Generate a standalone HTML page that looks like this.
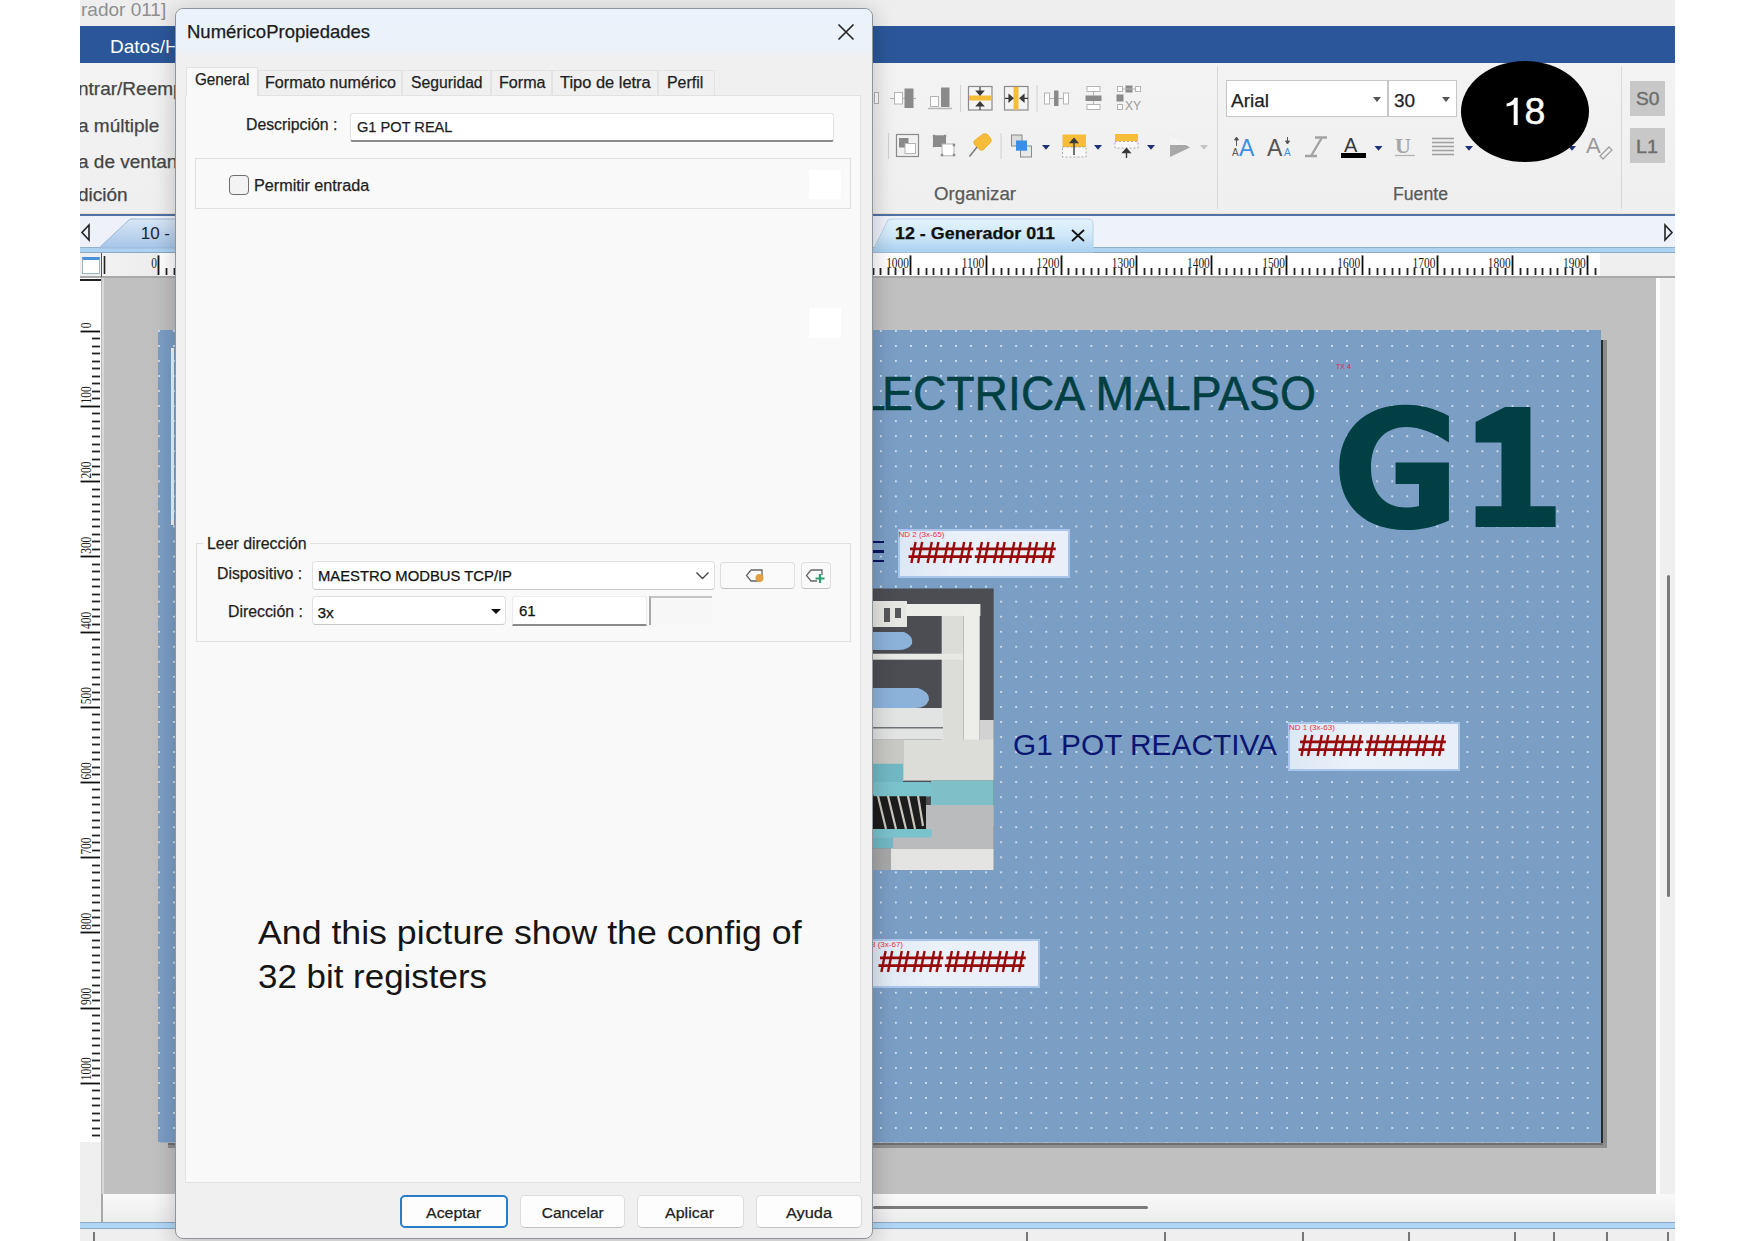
<!DOCTYPE html>
<html><head><meta charset="utf-8">
<style>
*{margin:0;padding:0;box-sizing:border-box}
html,body{width:1755px;height:1241px;overflow:hidden;background:#fff;font-family:"Liberation Sans",sans-serif;position:relative}
.a{position:absolute}
.t{position:absolute;white-space:nowrap;line-height:1}
svg{display:block}
</style></head><body>
<div class=a style="left:80px;top:0px;width:1595px;height:26px;background:#eeeeee;"></div>
<div class=t style="left:81.0px;top:0.4px;font-size:19px;color:#8f8f8f;font-weight:400;font-family:'Liberation Sans';font-style:normal;">rador 011]</div>
<div class=a style="left:80px;top:26px;width:1595px;height:37px;background:#2b579a;"></div>
<div class=t style="left:110.0px;top:36.9px;font-size:19px;color:#ffffff;font-weight:400;font-family:'Liberation Sans';font-style:normal;">Datos/H</div>
<div class=a style="left:80px;top:63px;width:1595px;height:151px;background:linear-gradient(#f3f3f3,#efefef);"></div>
<div class=t style="left:78.0px;top:79.2px;font-size:19px;color:#444444;font-weight:400;font-family:'Liberation Sans';font-style:normal;-webkit-text-stroke:0.25px #444444;">ntrar/Reemp</div>
<div class=t style="left:78.0px;top:115.6px;font-size:19px;color:#444444;font-weight:400;font-family:'Liberation Sans';font-style:normal;-webkit-text-stroke:0.25px #444444;">a múltiple</div>
<div class=t style="left:78.0px;top:151.9px;font-size:19px;color:#444444;font-weight:400;font-family:'Liberation Sans';font-style:normal;-webkit-text-stroke:0.25px #444444;">a de ventana</div>
<div class=t style="left:78.0px;top:184.6px;font-size:19px;color:#444444;font-weight:400;font-family:'Liberation Sans';font-style:normal;-webkit-text-stroke:0.25px #444444;">dición</div>
<div class=t style="left:934.0px;top:184.8px;font-size:18px;color:#5a5a5a;font-weight:400;font-family:'Liberation Sans';font-style:normal;transform:scaleX(1.0376);transform-origin:0 0;-webkit-text-stroke:0.25px #5a5a5a;">Organizar</div>
<div class=t style="left:1393.0px;top:184.8px;font-size:18px;color:#5a5a5a;font-weight:400;font-family:'Liberation Sans';font-style:normal;transform:scaleX(0.9813);transform-origin:0 0;-webkit-text-stroke:0.25px #5a5a5a;">Fuente</div>
<div class=a style="left:1217px;top:66px;width:1px;height:143px;background:#d8d8d8;"></div>
<div class=a style="left:1621px;top:66px;width:1px;height:143px;background:#d8d8d8;"></div>
<div class=a style="left:80px;top:213px;width:1595px;height:1px;background:#e9dfd3;"></div>
<div class=a style="left:80px;top:214px;width:1595px;height:2px;background:#4f73a6;"></div>
<div class=a style="left:80px;top:216px;width:1595px;height:32px;background:linear-gradient(90deg,#eef1fa,#eef2fb);"></div>
<div class=a style="left:80px;top:247px;width:1595px;height:1px;background:#8fb0d2;"></div>
<div class=a style="left:80px;top:248px;width:1595px;height:5px;background:#aed2f2;"></div>
<div class=a style="left:80px;top:252px;width:1595px;height:1px;background:#8ea9c5;"></div>
<svg class=a style='left:80px;top:214px' width='1595' height='40'><defs><linearGradient id='tg1' x1='0' y1='0' x2='0' y2='1'><stop offset='0' stop-color='#d9e7f6'/><stop offset='1' stop-color='#a6c5e8'/></linearGradient><linearGradient id='tg2' x1='0' y1='0' x2='0' y2='1'><stop offset='0' stop-color='#e3f3fc'/><stop offset='0.5' stop-color='#cfe8f8'/><stop offset='1' stop-color='#aad1f1'/></linearGradient></defs><path d='M19 34 L50 5 H140 V34 Z' fill='url(#tg1)' stroke='#9db8d8' stroke-width='1'/><path d='M792 38 L808 6 Q810 5 814 5 H1008 Q1013 5 1013 10 V38 Z' fill='url(#tg2)' stroke='#b7d2ea' stroke-width='1'/><path d='M9 11 L2 18.5 L9 26 Z' fill='none' stroke='#222' stroke-width='1.6'/><path d='M1585 11 L1592 18.5 L1585 26 Z' fill='none' stroke='#222' stroke-width='1.6'/><path d='M992 16 L1004 27 M1004 16 L992 27' stroke='#111' stroke-width='1.8'/></svg>
<div class=t style="left:140.7px;top:225.1px;font-size:17px;color:#1a2636;font-weight:400;font-family:'Liberation Sans';font-style:normal;">10 -</div>
<div class=t style="left:895.0px;top:225.1px;font-size:17px;color:#111;font-weight:700;font-family:'Liberation Sans';font-style:normal;transform:scaleX(1.0517);transform-origin:0 0;-webkit-text-stroke:0.25px #111;">12 - Generador 011</div>
<div class=a style="left:80px;top:253px;width:1595px;height:23px;background:#efefef;"></div>
<div class=a style="left:102px;top:253px;width:56px;height:23px;background:linear-gradient(90deg,#f2f2f2,#ececec);"></div>
<div class=a style="left:158px;top:253px;width:1442px;height:23px;background:#ffffff;"></div>
<div class=a style="left:80px;top:276px;width:1595px;height:2px;background:#a9a9a9;"></div>
<svg class=a style='left:0;top:253px' width='1755' height='24'><line x1='158.5' y1='2.4' x2='158.5' y2='22' stroke='#111' stroke-width='1.8'/><line x1='166.5' y1='15' x2='166.5' y2='22' stroke='#222' stroke-width='1.8'/><line x1='174.5' y1='15' x2='174.5' y2='22' stroke='#222' stroke-width='1.8'/><line x1='181.5' y1='15' x2='181.5' y2='22' stroke='#222' stroke-width='1.8'/><line x1='189.5' y1='15' x2='189.5' y2='22' stroke='#222' stroke-width='1.8'/><line x1='196.5' y1='15' x2='196.5' y2='22' stroke='#222' stroke-width='1.8'/><line x1='204.5' y1='15' x2='204.5' y2='22' stroke='#222' stroke-width='1.8'/><line x1='211.5' y1='15' x2='211.5' y2='22' stroke='#222' stroke-width='1.8'/><line x1='219.5' y1='15' x2='219.5' y2='22' stroke='#222' stroke-width='1.8'/><line x1='226.5' y1='15' x2='226.5' y2='22' stroke='#222' stroke-width='1.8'/><line x1='234.5' y1='2.4' x2='234.5' y2='22' stroke='#111' stroke-width='1.8'/><line x1='241.5' y1='15' x2='241.5' y2='22' stroke='#222' stroke-width='1.8'/><line x1='249.5' y1='15' x2='249.5' y2='22' stroke='#222' stroke-width='1.8'/><line x1='256.5' y1='15' x2='256.5' y2='22' stroke='#222' stroke-width='1.8'/><line x1='264.5' y1='15' x2='264.5' y2='22' stroke='#222' stroke-width='1.8'/><line x1='271.5' y1='15' x2='271.5' y2='22' stroke='#222' stroke-width='1.8'/><line x1='279.5' y1='15' x2='279.5' y2='22' stroke='#222' stroke-width='1.8'/><line x1='286.5' y1='15' x2='286.5' y2='22' stroke='#222' stroke-width='1.8'/><line x1='294.5' y1='15' x2='294.5' y2='22' stroke='#222' stroke-width='1.8'/><line x1='301.5' y1='15' x2='301.5' y2='22' stroke='#222' stroke-width='1.8'/><line x1='309.5' y1='2.4' x2='309.5' y2='22' stroke='#111' stroke-width='1.8'/><line x1='316.5' y1='15' x2='316.5' y2='22' stroke='#222' stroke-width='1.8'/><line x1='324.5' y1='15' x2='324.5' y2='22' stroke='#222' stroke-width='1.8'/><line x1='331.5' y1='15' x2='331.5' y2='22' stroke='#222' stroke-width='1.8'/><line x1='339.5' y1='15' x2='339.5' y2='22' stroke='#222' stroke-width='1.8'/><line x1='346.5' y1='15' x2='346.5' y2='22' stroke='#222' stroke-width='1.8'/><line x1='354.5' y1='15' x2='354.5' y2='22' stroke='#222' stroke-width='1.8'/><line x1='362.5' y1='15' x2='362.5' y2='22' stroke='#222' stroke-width='1.8'/><line x1='369.5' y1='15' x2='369.5' y2='22' stroke='#222' stroke-width='1.8'/><line x1='377.5' y1='15' x2='377.5' y2='22' stroke='#222' stroke-width='1.8'/><line x1='384.5' y1='2.4' x2='384.5' y2='22' stroke='#111' stroke-width='1.8'/><line x1='392.5' y1='15' x2='392.5' y2='22' stroke='#222' stroke-width='1.8'/><line x1='399.5' y1='15' x2='399.5' y2='22' stroke='#222' stroke-width='1.8'/><line x1='407.5' y1='15' x2='407.5' y2='22' stroke='#222' stroke-width='1.8'/><line x1='414.5' y1='15' x2='414.5' y2='22' stroke='#222' stroke-width='1.8'/><line x1='422.5' y1='15' x2='422.5' y2='22' stroke='#222' stroke-width='1.8'/><line x1='429.5' y1='15' x2='429.5' y2='22' stroke='#222' stroke-width='1.8'/><line x1='437.5' y1='15' x2='437.5' y2='22' stroke='#222' stroke-width='1.8'/><line x1='444.5' y1='15' x2='444.5' y2='22' stroke='#222' stroke-width='1.8'/><line x1='452.5' y1='15' x2='452.5' y2='22' stroke='#222' stroke-width='1.8'/><line x1='459.5' y1='2.4' x2='459.5' y2='22' stroke='#111' stroke-width='1.8'/><line x1='467.5' y1='15' x2='467.5' y2='22' stroke='#222' stroke-width='1.8'/><line x1='474.5' y1='15' x2='474.5' y2='22' stroke='#222' stroke-width='1.8'/><line x1='482.5' y1='15' x2='482.5' y2='22' stroke='#222' stroke-width='1.8'/><line x1='489.5' y1='15' x2='489.5' y2='22' stroke='#222' stroke-width='1.8'/><line x1='497.5' y1='15' x2='497.5' y2='22' stroke='#222' stroke-width='1.8'/><line x1='504.5' y1='15' x2='504.5' y2='22' stroke='#222' stroke-width='1.8'/><line x1='512.5' y1='15' x2='512.5' y2='22' stroke='#222' stroke-width='1.8'/><line x1='519.5' y1='15' x2='519.5' y2='22' stroke='#222' stroke-width='1.8'/><line x1='527.5' y1='15' x2='527.5' y2='22' stroke='#222' stroke-width='1.8'/><line x1='534.5' y1='2.4' x2='534.5' y2='22' stroke='#111' stroke-width='1.8'/><line x1='542.5' y1='15' x2='542.5' y2='22' stroke='#222' stroke-width='1.8'/><line x1='550.5' y1='15' x2='550.5' y2='22' stroke='#222' stroke-width='1.8'/><line x1='557.5' y1='15' x2='557.5' y2='22' stroke='#222' stroke-width='1.8'/><line x1='565.5' y1='15' x2='565.5' y2='22' stroke='#222' stroke-width='1.8'/><line x1='572.5' y1='15' x2='572.5' y2='22' stroke='#222' stroke-width='1.8'/><line x1='580.5' y1='15' x2='580.5' y2='22' stroke='#222' stroke-width='1.8'/><line x1='587.5' y1='15' x2='587.5' y2='22' stroke='#222' stroke-width='1.8'/><line x1='595.5' y1='15' x2='595.5' y2='22' stroke='#222' stroke-width='1.8'/><line x1='602.5' y1='15' x2='602.5' y2='22' stroke='#222' stroke-width='1.8'/><line x1='610.5' y1='2.4' x2='610.5' y2='22' stroke='#111' stroke-width='1.8'/><line x1='617.5' y1='15' x2='617.5' y2='22' stroke='#222' stroke-width='1.8'/><line x1='625.5' y1='15' x2='625.5' y2='22' stroke='#222' stroke-width='1.8'/><line x1='632.5' y1='15' x2='632.5' y2='22' stroke='#222' stroke-width='1.8'/><line x1='640.5' y1='15' x2='640.5' y2='22' stroke='#222' stroke-width='1.8'/><line x1='647.5' y1='15' x2='647.5' y2='22' stroke='#222' stroke-width='1.8'/><line x1='655.5' y1='15' x2='655.5' y2='22' stroke='#222' stroke-width='1.8'/><line x1='662.5' y1='15' x2='662.5' y2='22' stroke='#222' stroke-width='1.8'/><line x1='670.5' y1='15' x2='670.5' y2='22' stroke='#222' stroke-width='1.8'/><line x1='677.5' y1='15' x2='677.5' y2='22' stroke='#222' stroke-width='1.8'/><line x1='685.5' y1='2.4' x2='685.5' y2='22' stroke='#111' stroke-width='1.8'/><line x1='692.5' y1='15' x2='692.5' y2='22' stroke='#222' stroke-width='1.8'/><line x1='700.5' y1='15' x2='700.5' y2='22' stroke='#222' stroke-width='1.8'/><line x1='707.5' y1='15' x2='707.5' y2='22' stroke='#222' stroke-width='1.8'/><line x1='715.5' y1='15' x2='715.5' y2='22' stroke='#222' stroke-width='1.8'/><line x1='722.5' y1='15' x2='722.5' y2='22' stroke='#222' stroke-width='1.8'/><line x1='730.5' y1='15' x2='730.5' y2='22' stroke='#222' stroke-width='1.8'/><line x1='738.5' y1='15' x2='738.5' y2='22' stroke='#222' stroke-width='1.8'/><line x1='745.5' y1='15' x2='745.5' y2='22' stroke='#222' stroke-width='1.8'/><line x1='753.5' y1='15' x2='753.5' y2='22' stroke='#222' stroke-width='1.8'/><line x1='760.5' y1='2.4' x2='760.5' y2='22' stroke='#111' stroke-width='1.8'/><line x1='768.5' y1='15' x2='768.5' y2='22' stroke='#222' stroke-width='1.8'/><line x1='775.5' y1='15' x2='775.5' y2='22' stroke='#222' stroke-width='1.8'/><line x1='783.5' y1='15' x2='783.5' y2='22' stroke='#222' stroke-width='1.8'/><line x1='790.5' y1='15' x2='790.5' y2='22' stroke='#222' stroke-width='1.8'/><line x1='798.5' y1='15' x2='798.5' y2='22' stroke='#222' stroke-width='1.8'/><line x1='805.5' y1='15' x2='805.5' y2='22' stroke='#222' stroke-width='1.8'/><line x1='813.5' y1='15' x2='813.5' y2='22' stroke='#222' stroke-width='1.8'/><line x1='820.5' y1='15' x2='820.5' y2='22' stroke='#222' stroke-width='1.8'/><line x1='828.5' y1='15' x2='828.5' y2='22' stroke='#222' stroke-width='1.8'/><line x1='835.5' y1='2.4' x2='835.5' y2='22' stroke='#111' stroke-width='1.8'/><line x1='843.5' y1='15' x2='843.5' y2='22' stroke='#222' stroke-width='1.8'/><line x1='850.5' y1='15' x2='850.5' y2='22' stroke='#222' stroke-width='1.8'/><line x1='858.5' y1='15' x2='858.5' y2='22' stroke='#222' stroke-width='1.8'/><line x1='865.5' y1='15' x2='865.5' y2='22' stroke='#222' stroke-width='1.8'/><line x1='873.5' y1='15' x2='873.5' y2='22' stroke='#222' stroke-width='1.8'/><line x1='880.5' y1='15' x2='880.5' y2='22' stroke='#222' stroke-width='1.8'/><line x1='888.5' y1='15' x2='888.5' y2='22' stroke='#222' stroke-width='1.8'/><line x1='895.5' y1='15' x2='895.5' y2='22' stroke='#222' stroke-width='1.8'/><line x1='903.5' y1='15' x2='903.5' y2='22' stroke='#222' stroke-width='1.8'/><line x1='910.5' y1='2.4' x2='910.5' y2='22' stroke='#111' stroke-width='1.8'/><line x1='918.5' y1='15' x2='918.5' y2='22' stroke='#222' stroke-width='1.8'/><line x1='926.5' y1='15' x2='926.5' y2='22' stroke='#222' stroke-width='1.8'/><line x1='933.5' y1='15' x2='933.5' y2='22' stroke='#222' stroke-width='1.8'/><line x1='941.5' y1='15' x2='941.5' y2='22' stroke='#222' stroke-width='1.8'/><line x1='948.5' y1='15' x2='948.5' y2='22' stroke='#222' stroke-width='1.8'/><line x1='956.5' y1='15' x2='956.5' y2='22' stroke='#222' stroke-width='1.8'/><line x1='963.5' y1='15' x2='963.5' y2='22' stroke='#222' stroke-width='1.8'/><line x1='971.5' y1='15' x2='971.5' y2='22' stroke='#222' stroke-width='1.8'/><line x1='978.5' y1='15' x2='978.5' y2='22' stroke='#222' stroke-width='1.8'/><line x1='986.5' y1='2.4' x2='986.5' y2='22' stroke='#111' stroke-width='1.8'/><line x1='993.5' y1='15' x2='993.5' y2='22' stroke='#222' stroke-width='1.8'/><line x1='1001.5' y1='15' x2='1001.5' y2='22' stroke='#222' stroke-width='1.8'/><line x1='1008.5' y1='15' x2='1008.5' y2='22' stroke='#222' stroke-width='1.8'/><line x1='1016.5' y1='15' x2='1016.5' y2='22' stroke='#222' stroke-width='1.8'/><line x1='1023.5' y1='15' x2='1023.5' y2='22' stroke='#222' stroke-width='1.8'/><line x1='1031.5' y1='15' x2='1031.5' y2='22' stroke='#222' stroke-width='1.8'/><line x1='1038.5' y1='15' x2='1038.5' y2='22' stroke='#222' stroke-width='1.8'/><line x1='1046.5' y1='15' x2='1046.5' y2='22' stroke='#222' stroke-width='1.8'/><line x1='1053.5' y1='15' x2='1053.5' y2='22' stroke='#222' stroke-width='1.8'/><line x1='1061.5' y1='2.4' x2='1061.5' y2='22' stroke='#111' stroke-width='1.8'/><line x1='1068.5' y1='15' x2='1068.5' y2='22' stroke='#222' stroke-width='1.8'/><line x1='1076.5' y1='15' x2='1076.5' y2='22' stroke='#222' stroke-width='1.8'/><line x1='1083.5' y1='15' x2='1083.5' y2='22' stroke='#222' stroke-width='1.8'/><line x1='1091.5' y1='15' x2='1091.5' y2='22' stroke='#222' stroke-width='1.8'/><line x1='1098.5' y1='15' x2='1098.5' y2='22' stroke='#222' stroke-width='1.8'/><line x1='1106.5' y1='15' x2='1106.5' y2='22' stroke='#222' stroke-width='1.8'/><line x1='1114.5' y1='15' x2='1114.5' y2='22' stroke='#222' stroke-width='1.8'/><line x1='1121.5' y1='15' x2='1121.5' y2='22' stroke='#222' stroke-width='1.8'/><line x1='1129.5' y1='15' x2='1129.5' y2='22' stroke='#222' stroke-width='1.8'/><line x1='1136.5' y1='2.4' x2='1136.5' y2='22' stroke='#111' stroke-width='1.8'/><line x1='1144.5' y1='15' x2='1144.5' y2='22' stroke='#222' stroke-width='1.8'/><line x1='1151.5' y1='15' x2='1151.5' y2='22' stroke='#222' stroke-width='1.8'/><line x1='1159.5' y1='15' x2='1159.5' y2='22' stroke='#222' stroke-width='1.8'/><line x1='1166.5' y1='15' x2='1166.5' y2='22' stroke='#222' stroke-width='1.8'/><line x1='1174.5' y1='15' x2='1174.5' y2='22' stroke='#222' stroke-width='1.8'/><line x1='1181.5' y1='15' x2='1181.5' y2='22' stroke='#222' stroke-width='1.8'/><line x1='1189.5' y1='15' x2='1189.5' y2='22' stroke='#222' stroke-width='1.8'/><line x1='1196.5' y1='15' x2='1196.5' y2='22' stroke='#222' stroke-width='1.8'/><line x1='1204.5' y1='15' x2='1204.5' y2='22' stroke='#222' stroke-width='1.8'/><line x1='1211.5' y1='2.4' x2='1211.5' y2='22' stroke='#111' stroke-width='1.8'/><line x1='1219.5' y1='15' x2='1219.5' y2='22' stroke='#222' stroke-width='1.8'/><line x1='1226.5' y1='15' x2='1226.5' y2='22' stroke='#222' stroke-width='1.8'/><line x1='1234.5' y1='15' x2='1234.5' y2='22' stroke='#222' stroke-width='1.8'/><line x1='1241.5' y1='15' x2='1241.5' y2='22' stroke='#222' stroke-width='1.8'/><line x1='1249.5' y1='15' x2='1249.5' y2='22' stroke='#222' stroke-width='1.8'/><line x1='1256.5' y1='15' x2='1256.5' y2='22' stroke='#222' stroke-width='1.8'/><line x1='1264.5' y1='15' x2='1264.5' y2='22' stroke='#222' stroke-width='1.8'/><line x1='1271.5' y1='15' x2='1271.5' y2='22' stroke='#222' stroke-width='1.8'/><line x1='1279.5' y1='15' x2='1279.5' y2='22' stroke='#222' stroke-width='1.8'/><line x1='1286.5' y1='2.4' x2='1286.5' y2='22' stroke='#111' stroke-width='1.8'/><line x1='1294.5' y1='15' x2='1294.5' y2='22' stroke='#222' stroke-width='1.8'/><line x1='1302.5' y1='15' x2='1302.5' y2='22' stroke='#222' stroke-width='1.8'/><line x1='1309.5' y1='15' x2='1309.5' y2='22' stroke='#222' stroke-width='1.8'/><line x1='1317.5' y1='15' x2='1317.5' y2='22' stroke='#222' stroke-width='1.8'/><line x1='1324.5' y1='15' x2='1324.5' y2='22' stroke='#222' stroke-width='1.8'/><line x1='1332.5' y1='15' x2='1332.5' y2='22' stroke='#222' stroke-width='1.8'/><line x1='1339.5' y1='15' x2='1339.5' y2='22' stroke='#222' stroke-width='1.8'/><line x1='1347.5' y1='15' x2='1347.5' y2='22' stroke='#222' stroke-width='1.8'/><line x1='1354.5' y1='15' x2='1354.5' y2='22' stroke='#222' stroke-width='1.8'/><line x1='1362.5' y1='2.4' x2='1362.5' y2='22' stroke='#111' stroke-width='1.8'/><line x1='1369.5' y1='15' x2='1369.5' y2='22' stroke='#222' stroke-width='1.8'/><line x1='1377.5' y1='15' x2='1377.5' y2='22' stroke='#222' stroke-width='1.8'/><line x1='1384.5' y1='15' x2='1384.5' y2='22' stroke='#222' stroke-width='1.8'/><line x1='1392.5' y1='15' x2='1392.5' y2='22' stroke='#222' stroke-width='1.8'/><line x1='1399.5' y1='15' x2='1399.5' y2='22' stroke='#222' stroke-width='1.8'/><line x1='1407.5' y1='15' x2='1407.5' y2='22' stroke='#222' stroke-width='1.8'/><line x1='1414.5' y1='15' x2='1414.5' y2='22' stroke='#222' stroke-width='1.8'/><line x1='1422.5' y1='15' x2='1422.5' y2='22' stroke='#222' stroke-width='1.8'/><line x1='1429.5' y1='15' x2='1429.5' y2='22' stroke='#222' stroke-width='1.8'/><line x1='1437.5' y1='2.4' x2='1437.5' y2='22' stroke='#111' stroke-width='1.8'/><line x1='1444.5' y1='15' x2='1444.5' y2='22' stroke='#222' stroke-width='1.8'/><line x1='1452.5' y1='15' x2='1452.5' y2='22' stroke='#222' stroke-width='1.8'/><line x1='1459.5' y1='15' x2='1459.5' y2='22' stroke='#222' stroke-width='1.8'/><line x1='1467.5' y1='15' x2='1467.5' y2='22' stroke='#222' stroke-width='1.8'/><line x1='1474.5' y1='15' x2='1474.5' y2='22' stroke='#222' stroke-width='1.8'/><line x1='1482.5' y1='15' x2='1482.5' y2='22' stroke='#222' stroke-width='1.8'/><line x1='1490.5' y1='15' x2='1490.5' y2='22' stroke='#222' stroke-width='1.8'/><line x1='1497.5' y1='15' x2='1497.5' y2='22' stroke='#222' stroke-width='1.8'/><line x1='1505.5' y1='15' x2='1505.5' y2='22' stroke='#222' stroke-width='1.8'/><line x1='1512.5' y1='2.4' x2='1512.5' y2='22' stroke='#111' stroke-width='1.8'/><line x1='1520.5' y1='15' x2='1520.5' y2='22' stroke='#222' stroke-width='1.8'/><line x1='1527.5' y1='15' x2='1527.5' y2='22' stroke='#222' stroke-width='1.8'/><line x1='1535.5' y1='15' x2='1535.5' y2='22' stroke='#222' stroke-width='1.8'/><line x1='1542.5' y1='15' x2='1542.5' y2='22' stroke='#222' stroke-width='1.8'/><line x1='1550.5' y1='15' x2='1550.5' y2='22' stroke='#222' stroke-width='1.8'/><line x1='1557.5' y1='15' x2='1557.5' y2='22' stroke='#222' stroke-width='1.8'/><line x1='1565.5' y1='15' x2='1565.5' y2='22' stroke='#222' stroke-width='1.8'/><line x1='1572.5' y1='15' x2='1572.5' y2='22' stroke='#222' stroke-width='1.8'/><line x1='1580.5' y1='15' x2='1580.5' y2='22' stroke='#222' stroke-width='1.8'/><line x1='1587.5' y1='2.4' x2='1587.5' y2='22' stroke='#111' stroke-width='1.8'/><line x1='1595.5' y1='15' x2='1595.5' y2='22' stroke='#222' stroke-width='1.8'/><line x1='104.5' y1='3' x2='104.5' y2='21' stroke='#222' stroke-width='1.6'/><text x='157.0' y='14.7' font-family='Liberation Serif' font-size='13.6' text-anchor='end' fill='#1a1a1a' transform='translate(157.0,0) scale(0.84,1) translate(-157.0,0)'>0</text><text x='232.2' y='14.7' font-family='Liberation Serif' font-size='13.6' text-anchor='end' fill='#1a1a1a' transform='translate(232.2,0) scale(0.84,1) translate(-232.2,0)'>100</text><text x='307.4' y='14.7' font-family='Liberation Serif' font-size='13.6' text-anchor='end' fill='#1a1a1a' transform='translate(307.4,0) scale(0.84,1) translate(-307.4,0)'>200</text><text x='382.6' y='14.7' font-family='Liberation Serif' font-size='13.6' text-anchor='end' fill='#1a1a1a' transform='translate(382.6,0) scale(0.84,1) translate(-382.6,0)'>300</text><text x='457.8' y='14.7' font-family='Liberation Serif' font-size='13.6' text-anchor='end' fill='#1a1a1a' transform='translate(457.8,0) scale(0.84,1) translate(-457.8,0)'>400</text><text x='533.0' y='14.7' font-family='Liberation Serif' font-size='13.6' text-anchor='end' fill='#1a1a1a' transform='translate(533.0,0) scale(0.84,1) translate(-533.0,0)'>500</text><text x='608.2' y='14.7' font-family='Liberation Serif' font-size='13.6' text-anchor='end' fill='#1a1a1a' transform='translate(608.2,0) scale(0.84,1) translate(-608.2,0)'>600</text><text x='683.4' y='14.7' font-family='Liberation Serif' font-size='13.6' text-anchor='end' fill='#1a1a1a' transform='translate(683.4,0) scale(0.84,1) translate(-683.4,0)'>700</text><text x='758.6' y='14.7' font-family='Liberation Serif' font-size='13.6' text-anchor='end' fill='#1a1a1a' transform='translate(758.6,0) scale(0.84,1) translate(-758.6,0)'>800</text><text x='833.8' y='14.7' font-family='Liberation Serif' font-size='13.6' text-anchor='end' fill='#1a1a1a' transform='translate(833.8,0) scale(0.84,1) translate(-833.8,0)'>900</text><text x='909.0' y='14.7' font-family='Liberation Serif' font-size='13.6' text-anchor='end' fill='#1a1a1a' transform='translate(909.0,0) scale(0.84,1) translate(-909.0,0)'>1000</text><text x='984.2' y='14.7' font-family='Liberation Serif' font-size='13.6' text-anchor='end' fill='#1a1a1a' transform='translate(984.2,0) scale(0.84,1) translate(-984.2,0)'>1100</text><text x='1059.4' y='14.7' font-family='Liberation Serif' font-size='13.6' text-anchor='end' fill='#1a1a1a' transform='translate(1059.4,0) scale(0.84,1) translate(-1059.4,0)'>1200</text><text x='1134.6' y='14.7' font-family='Liberation Serif' font-size='13.6' text-anchor='end' fill='#1a1a1a' transform='translate(1134.6,0) scale(0.84,1) translate(-1134.6,0)'>1300</text><text x='1209.8' y='14.7' font-family='Liberation Serif' font-size='13.6' text-anchor='end' fill='#1a1a1a' transform='translate(1209.8,0) scale(0.84,1) translate(-1209.8,0)'>1400</text><text x='1285.0' y='14.7' font-family='Liberation Serif' font-size='13.6' text-anchor='end' fill='#1a1a1a' transform='translate(1285.0,0) scale(0.84,1) translate(-1285.0,0)'>1500</text><text x='1360.2' y='14.7' font-family='Liberation Serif' font-size='13.6' text-anchor='end' fill='#1a1a1a' transform='translate(1360.2,0) scale(0.84,1) translate(-1360.2,0)'>1600</text><text x='1435.4' y='14.7' font-family='Liberation Serif' font-size='13.6' text-anchor='end' fill='#1a1a1a' transform='translate(1435.4,0) scale(0.84,1) translate(-1435.4,0)'>1700</text><text x='1510.6' y='14.7' font-family='Liberation Serif' font-size='13.6' text-anchor='end' fill='#1a1a1a' transform='translate(1510.6,0) scale(0.84,1) translate(-1510.6,0)'>1800</text><text x='1585.8' y='14.7' font-family='Liberation Serif' font-size='13.6' text-anchor='end' fill='#1a1a1a' transform='translate(1585.8,0) scale(0.84,1) translate(-1585.8,0)'>1900</text></svg>
<div class=a style="left:82px;top:257px;width:18px;height:17px;background:#fff;border:1px solid #9fb3c8;border-top:3px solid #4a90d9;box-sizing:border-box"></div>
<div class=a style="left:101px;top:253px;width:1px;height:24px;background:#555;"></div>
<div class=a style="left:80px;top:278px;width:21px;height:864px;background:#ffffff;"></div>
<div class=a style="left:80px;top:1142px;width:21px;height:52px;background:#efefef;"></div>
<div class=a style="left:80px;top:279px;width:21px;height:2px;background:#222;"></div>
<div class=a style="left:101px;top:278px;width:1px;height:945px;background:#b8b8b8;"></div>
<div class=a style="left:102px;top:278px;width:2px;height:916px;background:#d8d8d8;"></div>
<svg class=a style='left:80px;top:0' width='24' height='1241'><line x1='0.5' y1='331.5' x2='20' y2='331.5' stroke='#111' stroke-width='1.8'/><line x1='12' y1='338.5' x2='20' y2='338.5' stroke='#222' stroke-width='1.8'/><line x1='12' y1='346.5' x2='20' y2='346.5' stroke='#222' stroke-width='1.8'/><line x1='12' y1='353.5' x2='20' y2='353.5' stroke='#222' stroke-width='1.8'/><line x1='12' y1='361.5' x2='20' y2='361.5' stroke='#222' stroke-width='1.8'/><line x1='12' y1='368.5' x2='20' y2='368.5' stroke='#222' stroke-width='1.8'/><line x1='12' y1='376.5' x2='20' y2='376.5' stroke='#222' stroke-width='1.8'/><line x1='12' y1='383.5' x2='20' y2='383.5' stroke='#222' stroke-width='1.8'/><line x1='12' y1='391.5' x2='20' y2='391.5' stroke='#222' stroke-width='1.8'/><line x1='12' y1='398.5' x2='20' y2='398.5' stroke='#222' stroke-width='1.8'/><line x1='0.5' y1='406.5' x2='20' y2='406.5' stroke='#111' stroke-width='1.8'/><line x1='12' y1='413.5' x2='20' y2='413.5' stroke='#222' stroke-width='1.8'/><line x1='12' y1='421.5' x2='20' y2='421.5' stroke='#222' stroke-width='1.8'/><line x1='12' y1='428.5' x2='20' y2='428.5' stroke='#222' stroke-width='1.8'/><line x1='12' y1='436.5' x2='20' y2='436.5' stroke='#222' stroke-width='1.8'/><line x1='12' y1='444.5' x2='20' y2='444.5' stroke='#222' stroke-width='1.8'/><line x1='12' y1='451.5' x2='20' y2='451.5' stroke='#222' stroke-width='1.8'/><line x1='12' y1='459.5' x2='20' y2='459.5' stroke='#222' stroke-width='1.8'/><line x1='12' y1='466.5' x2='20' y2='466.5' stroke='#222' stroke-width='1.8'/><line x1='12' y1='474.5' x2='20' y2='474.5' stroke='#222' stroke-width='1.8'/><line x1='0.5' y1='481.5' x2='20' y2='481.5' stroke='#111' stroke-width='1.8'/><line x1='12' y1='489.5' x2='20' y2='489.5' stroke='#222' stroke-width='1.8'/><line x1='12' y1='496.5' x2='20' y2='496.5' stroke='#222' stroke-width='1.8'/><line x1='12' y1='504.5' x2='20' y2='504.5' stroke='#222' stroke-width='1.8'/><line x1='12' y1='511.5' x2='20' y2='511.5' stroke='#222' stroke-width='1.8'/><line x1='12' y1='519.5' x2='20' y2='519.5' stroke='#222' stroke-width='1.8'/><line x1='12' y1='526.5' x2='20' y2='526.5' stroke='#222' stroke-width='1.8'/><line x1='12' y1='534.5' x2='20' y2='534.5' stroke='#222' stroke-width='1.8'/><line x1='12' y1='541.5' x2='20' y2='541.5' stroke='#222' stroke-width='1.8'/><line x1='12' y1='549.5' x2='20' y2='549.5' stroke='#222' stroke-width='1.8'/><line x1='0.5' y1='556.5' x2='20' y2='556.5' stroke='#111' stroke-width='1.8'/><line x1='12' y1='564.5' x2='20' y2='564.5' stroke='#222' stroke-width='1.8'/><line x1='12' y1='571.5' x2='20' y2='571.5' stroke='#222' stroke-width='1.8'/><line x1='12' y1='579.5' x2='20' y2='579.5' stroke='#222' stroke-width='1.8'/><line x1='12' y1='586.5' x2='20' y2='586.5' stroke='#222' stroke-width='1.8'/><line x1='12' y1='594.5' x2='20' y2='594.5' stroke='#222' stroke-width='1.8'/><line x1='12' y1='601.5' x2='20' y2='601.5' stroke='#222' stroke-width='1.8'/><line x1='12' y1='609.5' x2='20' y2='609.5' stroke='#222' stroke-width='1.8'/><line x1='12' y1='616.5' x2='20' y2='616.5' stroke='#222' stroke-width='1.8'/><line x1='12' y1='624.5' x2='20' y2='624.5' stroke='#222' stroke-width='1.8'/><line x1='0.5' y1='632.5' x2='20' y2='632.5' stroke='#111' stroke-width='1.8'/><line x1='12' y1='639.5' x2='20' y2='639.5' stroke='#222' stroke-width='1.8'/><line x1='12' y1='647.5' x2='20' y2='647.5' stroke='#222' stroke-width='1.8'/><line x1='12' y1='654.5' x2='20' y2='654.5' stroke='#222' stroke-width='1.8'/><line x1='12' y1='662.5' x2='20' y2='662.5' stroke='#222' stroke-width='1.8'/><line x1='12' y1='669.5' x2='20' y2='669.5' stroke='#222' stroke-width='1.8'/><line x1='12' y1='677.5' x2='20' y2='677.5' stroke='#222' stroke-width='1.8'/><line x1='12' y1='684.5' x2='20' y2='684.5' stroke='#222' stroke-width='1.8'/><line x1='12' y1='692.5' x2='20' y2='692.5' stroke='#222' stroke-width='1.8'/><line x1='12' y1='699.5' x2='20' y2='699.5' stroke='#222' stroke-width='1.8'/><line x1='0.5' y1='707.5' x2='20' y2='707.5' stroke='#111' stroke-width='1.8'/><line x1='12' y1='714.5' x2='20' y2='714.5' stroke='#222' stroke-width='1.8'/><line x1='12' y1='722.5' x2='20' y2='722.5' stroke='#222' stroke-width='1.8'/><line x1='12' y1='729.5' x2='20' y2='729.5' stroke='#222' stroke-width='1.8'/><line x1='12' y1='737.5' x2='20' y2='737.5' stroke='#222' stroke-width='1.8'/><line x1='12' y1='744.5' x2='20' y2='744.5' stroke='#222' stroke-width='1.8'/><line x1='12' y1='752.5' x2='20' y2='752.5' stroke='#222' stroke-width='1.8'/><line x1='12' y1='759.5' x2='20' y2='759.5' stroke='#222' stroke-width='1.8'/><line x1='12' y1='767.5' x2='20' y2='767.5' stroke='#222' stroke-width='1.8'/><line x1='12' y1='774.5' x2='20' y2='774.5' stroke='#222' stroke-width='1.8'/><line x1='0.5' y1='782.5' x2='20' y2='782.5' stroke='#111' stroke-width='1.8'/><line x1='12' y1='789.5' x2='20' y2='789.5' stroke='#222' stroke-width='1.8'/><line x1='12' y1='797.5' x2='20' y2='797.5' stroke='#222' stroke-width='1.8'/><line x1='12' y1='804.5' x2='20' y2='804.5' stroke='#222' stroke-width='1.8'/><line x1='12' y1='812.5' x2='20' y2='812.5' stroke='#222' stroke-width='1.8'/><line x1='12' y1='820.5' x2='20' y2='820.5' stroke='#222' stroke-width='1.8'/><line x1='12' y1='827.5' x2='20' y2='827.5' stroke='#222' stroke-width='1.8'/><line x1='12' y1='835.5' x2='20' y2='835.5' stroke='#222' stroke-width='1.8'/><line x1='12' y1='842.5' x2='20' y2='842.5' stroke='#222' stroke-width='1.8'/><line x1='12' y1='850.5' x2='20' y2='850.5' stroke='#222' stroke-width='1.8'/><line x1='0.5' y1='857.5' x2='20' y2='857.5' stroke='#111' stroke-width='1.8'/><line x1='12' y1='865.5' x2='20' y2='865.5' stroke='#222' stroke-width='1.8'/><line x1='12' y1='872.5' x2='20' y2='872.5' stroke='#222' stroke-width='1.8'/><line x1='12' y1='880.5' x2='20' y2='880.5' stroke='#222' stroke-width='1.8'/><line x1='12' y1='887.5' x2='20' y2='887.5' stroke='#222' stroke-width='1.8'/><line x1='12' y1='895.5' x2='20' y2='895.5' stroke='#222' stroke-width='1.8'/><line x1='12' y1='902.5' x2='20' y2='902.5' stroke='#222' stroke-width='1.8'/><line x1='12' y1='910.5' x2='20' y2='910.5' stroke='#222' stroke-width='1.8'/><line x1='12' y1='917.5' x2='20' y2='917.5' stroke='#222' stroke-width='1.8'/><line x1='12' y1='925.5' x2='20' y2='925.5' stroke='#222' stroke-width='1.8'/><line x1='0.5' y1='932.5' x2='20' y2='932.5' stroke='#111' stroke-width='1.8'/><line x1='12' y1='940.5' x2='20' y2='940.5' stroke='#222' stroke-width='1.8'/><line x1='12' y1='947.5' x2='20' y2='947.5' stroke='#222' stroke-width='1.8'/><line x1='12' y1='955.5' x2='20' y2='955.5' stroke='#222' stroke-width='1.8'/><line x1='12' y1='962.5' x2='20' y2='962.5' stroke='#222' stroke-width='1.8'/><line x1='12' y1='970.5' x2='20' y2='970.5' stroke='#222' stroke-width='1.8'/><line x1='12' y1='977.5' x2='20' y2='977.5' stroke='#222' stroke-width='1.8'/><line x1='12' y1='985.5' x2='20' y2='985.5' stroke='#222' stroke-width='1.8'/><line x1='12' y1='992.5' x2='20' y2='992.5' stroke='#222' stroke-width='1.8'/><line x1='12' y1='1000.5' x2='20' y2='1000.5' stroke='#222' stroke-width='1.8'/><line x1='0.5' y1='1008.5' x2='20' y2='1008.5' stroke='#111' stroke-width='1.8'/><line x1='12' y1='1015.5' x2='20' y2='1015.5' stroke='#222' stroke-width='1.8'/><line x1='12' y1='1023.5' x2='20' y2='1023.5' stroke='#222' stroke-width='1.8'/><line x1='12' y1='1030.5' x2='20' y2='1030.5' stroke='#222' stroke-width='1.8'/><line x1='12' y1='1038.5' x2='20' y2='1038.5' stroke='#222' stroke-width='1.8'/><line x1='12' y1='1045.5' x2='20' y2='1045.5' stroke='#222' stroke-width='1.8'/><line x1='12' y1='1053.5' x2='20' y2='1053.5' stroke='#222' stroke-width='1.8'/><line x1='12' y1='1060.5' x2='20' y2='1060.5' stroke='#222' stroke-width='1.8'/><line x1='12' y1='1068.5' x2='20' y2='1068.5' stroke='#222' stroke-width='1.8'/><line x1='12' y1='1075.5' x2='20' y2='1075.5' stroke='#222' stroke-width='1.8'/><line x1='0.5' y1='1083.5' x2='20' y2='1083.5' stroke='#111' stroke-width='1.8'/><line x1='12' y1='1090.5' x2='20' y2='1090.5' stroke='#222' stroke-width='1.8'/><line x1='12' y1='1098.5' x2='20' y2='1098.5' stroke='#222' stroke-width='1.8'/><line x1='12' y1='1105.5' x2='20' y2='1105.5' stroke='#222' stroke-width='1.8'/><line x1='12' y1='1113.5' x2='20' y2='1113.5' stroke='#222' stroke-width='1.8'/><line x1='12' y1='1120.5' x2='20' y2='1120.5' stroke='#222' stroke-width='1.8'/><line x1='12' y1='1128.5' x2='20' y2='1128.5' stroke='#222' stroke-width='1.8'/><line x1='12' y1='1135.5' x2='20' y2='1135.5' stroke='#222' stroke-width='1.8'/><text transform='translate(11,328.2) rotate(-90) scale(0.84,1)' font-family='Liberation Serif' font-size='13.6' text-anchor='start' fill='#1a1a1a'>0</text><text transform='translate(11,403.4) rotate(-90) scale(0.84,1)' font-family='Liberation Serif' font-size='13.6' text-anchor='start' fill='#1a1a1a'>100</text><text transform='translate(11,478.6) rotate(-90) scale(0.84,1)' font-family='Liberation Serif' font-size='13.6' text-anchor='start' fill='#1a1a1a'>200</text><text transform='translate(11,553.8) rotate(-90) scale(0.84,1)' font-family='Liberation Serif' font-size='13.6' text-anchor='start' fill='#1a1a1a'>300</text><text transform='translate(11,629.0) rotate(-90) scale(0.84,1)' font-family='Liberation Serif' font-size='13.6' text-anchor='start' fill='#1a1a1a'>400</text><text transform='translate(11,704.2) rotate(-90) scale(0.84,1)' font-family='Liberation Serif' font-size='13.6' text-anchor='start' fill='#1a1a1a'>500</text><text transform='translate(11,779.4) rotate(-90) scale(0.84,1)' font-family='Liberation Serif' font-size='13.6' text-anchor='start' fill='#1a1a1a'>600</text><text transform='translate(11,854.6) rotate(-90) scale(0.84,1)' font-family='Liberation Serif' font-size='13.6' text-anchor='start' fill='#1a1a1a'>700</text><text transform='translate(11,929.8) rotate(-90) scale(0.84,1)' font-family='Liberation Serif' font-size='13.6' text-anchor='start' fill='#1a1a1a'>800</text><text transform='translate(11,1005.0) rotate(-90) scale(0.84,1)' font-family='Liberation Serif' font-size='13.6' text-anchor='start' fill='#1a1a1a'>900</text><text transform='translate(11,1080.2) rotate(-90) scale(0.84,1)' font-family='Liberation Serif' font-size='13.6' text-anchor='start' fill='#1a1a1a'>1000</text></svg>
<div class=a style="left:104px;top:278px;width:1552px;height:916px;background:#c0c0c0;"></div>
<div class=a style="left:1601px;top:340px;width:6px;height:808px;background:#8a8a8a;"></div>
<div class=a style="left:1601px;top:340px;width:2px;height:803px;background:#2a2a2a;"></div>
<div class=a style="left:168px;top:1143px;width:1439px;height:5px;background:#8f8f8f;"></div>
<div class=a style="left:168px;top:1143px;width:1435px;height:2px;background:#707070;"></div>
<svg class=a style='left:157.5px;top:330.2px' width='1443.5' height='812.5'><defs><pattern id='dp' x='0' y='0' width='15.04' height='15.04' patternUnits='userSpaceOnUse'><rect x='0' y='0' width='1.8' height='1.8' fill='#d6e4f3'/></pattern></defs><rect width='100%' height='100%' fill='#7b9ec5'/><rect width='100%' height='100%' fill='url(#dp)'/></svg>
<div class=a style="left:171px;top:348px;width:3px;height:177px;background:#f4f6f8;"></div>
<div class=t style="left:882.0px;top:369.9px;font-size:48px;color:#003f42;font-weight:400;font-family:'Liberation Sans';font-style:normal;transform:scaleX(0.9647);transform-origin:0 0;-webkit-text-stroke:0.5px #003f42;">ECTRICA MALPASO</div>
<div class=t style="left:859.0px;top:369.9px;font-size:48px;color:#003f42;font-weight:400;font-family:'Liberation Sans';font-style:normal;-webkit-text-stroke:0.5px #003f42;">L</div>
<svg class=a style='left:0;top:0' width='1755' height='600'><g fill='#003f43'><path d='M1448.9,415.9 C1433,408 1420,404.8 1405.9,404.8 C1363,404.8 1339.3,432 1339.3,467.5 C1339.3,506 1365,530 1405.9,530 C1422,530 1437,526 1448.9,520.4 L1448.9,462.6 L1395.6,462.6 L1395.6,484 L1419,484 L1419,506 C1414,507.5 1410,507.5 1405.9,507.5 C1383,507.5 1371,491 1371,467.5 C1371,443 1384,427 1405.9,427 C1420,427 1435,433 1448.9,442.6 Z'/><path d='M1475.6,421.9 L1505,407 L1530.4,407 L1530.4,506.3 L1555.6,506.3 L1555.6,527 L1475.6,527 L1475.6,506.3 L1501.5,506.3 L1501.5,442.6 L1475.6,442.6 Z'/></g></svg>
<div class=t style="left:1336.0px;top:363.1px;font-size:7px;color:#e0204a;font-weight:400;font-family:'Liberation Sans';font-style:normal;">TX 4</div>
<div class=a style="left:897.5px;top:529.2px;width:172.3px;height:48.5px;background:linear-gradient(90deg,#dde8f5,#eaf1f9 40%,#e8eff8);border:2px solid #a9c6ea;box-sizing:border-box"></div><div class=t style="left:898.5px;top:531.4px;font-size:8px;color:#e8303c;font-weight:400;font-family:'Liberation Sans';font-style:normal;">ND 2 (3x-65)</div><svg class=a style='left:902.7px;top:539.8px' width='165' height='25'><g stroke='#990a0a' stroke-width='2.4' fill='none'><line x1='12.6' y1='2' x2='8.4' y2='23'/><line x1='19.2' y1='2' x2='15.0' y2='23'/><line x1='28.8' y1='2' x2='24.6' y2='23'/><line x1='35.4' y1='2' x2='31.2' y2='23'/><line x1='45.0' y1='2' x2='40.8' y2='23'/><line x1='51.6' y1='2' x2='47.4' y2='23'/><line x1='61.2' y1='2' x2='57.0' y2='23'/><line x1='67.8' y1='2' x2='63.6' y2='23'/><line x1='7.0' y1='8.9' x2='70.3' y2='8.9' stroke-width='2.8'/><line x1='5.5' y1='16.6' x2='68.8' y2='16.6' stroke-width='2.8'/><line x1='78.9' y1='2' x2='74.7' y2='23'/><line x1='85.5' y1='2' x2='81.3' y2='23'/><line x1='95.1' y1='2' x2='90.9' y2='23'/><line x1='101.7' y1='2' x2='97.5' y2='23'/><line x1='111.3' y1='2' x2='107.1' y2='23'/><line x1='117.9' y1='2' x2='113.7' y2='23'/><line x1='127.5' y1='2' x2='123.3' y2='23'/><line x1='134.1' y1='2' x2='129.9' y2='23'/><line x1='143.7' y1='2' x2='139.5' y2='23'/><line x1='150.3' y1='2' x2='146.1' y2='23'/><line x1='73.3' y1='8.9' x2='152.8' y2='8.9' stroke-width='2.8'/><line x1='71.8' y1='16.6' x2='151.3' y2='16.6' stroke-width='2.8'/></g></svg>
<div class=a style="left:1288px;top:722px;width:172.3px;height:49px;background:linear-gradient(90deg,#dde8f5,#eaf1f9 40%,#e8eff8);border:2px solid #a9c6ea;box-sizing:border-box"></div><div class=t style="left:1289.0px;top:724.2px;font-size:8px;color:#e8303c;font-weight:400;font-family:'Liberation Sans';font-style:normal;">ND 1 (3x-63)</div><svg class=a style='left:1293.2px;top:732.6px' width='165' height='25'><g stroke='#990a0a' stroke-width='2.4' fill='none'><line x1='12.6' y1='2' x2='8.4' y2='23'/><line x1='19.2' y1='2' x2='15.0' y2='23'/><line x1='28.8' y1='2' x2='24.6' y2='23'/><line x1='35.4' y1='2' x2='31.2' y2='23'/><line x1='45.0' y1='2' x2='40.8' y2='23'/><line x1='51.6' y1='2' x2='47.4' y2='23'/><line x1='61.2' y1='2' x2='57.0' y2='23'/><line x1='67.8' y1='2' x2='63.6' y2='23'/><line x1='7.0' y1='8.9' x2='70.3' y2='8.9' stroke-width='2.8'/><line x1='5.5' y1='16.6' x2='68.8' y2='16.6' stroke-width='2.8'/><line x1='78.9' y1='2' x2='74.7' y2='23'/><line x1='85.5' y1='2' x2='81.3' y2='23'/><line x1='95.1' y1='2' x2='90.9' y2='23'/><line x1='101.7' y1='2' x2='97.5' y2='23'/><line x1='111.3' y1='2' x2='107.1' y2='23'/><line x1='117.9' y1='2' x2='113.7' y2='23'/><line x1='127.5' y1='2' x2='123.3' y2='23'/><line x1='134.1' y1='2' x2='129.9' y2='23'/><line x1='143.7' y1='2' x2='139.5' y2='23'/><line x1='150.3' y1='2' x2='146.1' y2='23'/><line x1='73.3' y1='8.9' x2='152.8' y2='8.9' stroke-width='2.8'/><line x1='71.8' y1='16.6' x2='151.3' y2='16.6' stroke-width='2.8'/></g></svg>
<div class=a style="left:862px;top:938.5px;width:178px;height:49px;background:linear-gradient(90deg,#dde8f5,#eaf1f9 40%,#e8eff8);border:2px solid #a9c6ea;box-sizing:border-box"></div><div class=t style="left:863.0px;top:940.7px;font-size:8px;color:#e8303c;font-weight:400;font-family:'Liberation Sans';font-style:normal;">D 3 (3x-67)</div><svg class=a style='left:872.9px;top:949.1px' width='165' height='25'><g stroke='#990a0a' stroke-width='2.4' fill='none'><line x1='12.6' y1='2' x2='8.4' y2='23'/><line x1='19.2' y1='2' x2='15.0' y2='23'/><line x1='28.8' y1='2' x2='24.6' y2='23'/><line x1='35.4' y1='2' x2='31.2' y2='23'/><line x1='45.0' y1='2' x2='40.8' y2='23'/><line x1='51.6' y1='2' x2='47.4' y2='23'/><line x1='61.2' y1='2' x2='57.0' y2='23'/><line x1='67.8' y1='2' x2='63.6' y2='23'/><line x1='7.0' y1='8.9' x2='70.3' y2='8.9' stroke-width='2.8'/><line x1='5.5' y1='16.6' x2='68.8' y2='16.6' stroke-width='2.8'/><line x1='78.9' y1='2' x2='74.7' y2='23'/><line x1='85.5' y1='2' x2='81.3' y2='23'/><line x1='95.1' y1='2' x2='90.9' y2='23'/><line x1='101.7' y1='2' x2='97.5' y2='23'/><line x1='111.3' y1='2' x2='107.1' y2='23'/><line x1='117.9' y1='2' x2='113.7' y2='23'/><line x1='127.5' y1='2' x2='123.3' y2='23'/><line x1='134.1' y1='2' x2='129.9' y2='23'/><line x1='143.7' y1='2' x2='139.5' y2='23'/><line x1='150.3' y1='2' x2='146.1' y2='23'/><line x1='73.3' y1='8.9' x2='152.8' y2='8.9' stroke-width='2.8'/><line x1='71.8' y1='16.6' x2='151.3' y2='16.6' stroke-width='2.8'/></g></svg>
<div class=a style="left:866px;top:540.6px;width:18px;height:2.6px;background:#0a1460;"></div>
<div class=a style="left:866px;top:550.1px;width:18px;height:2.6px;background:#0a1460;"></div>
<div class=a style="left:866px;top:559.7px;width:18px;height:2.6px;background:#0a1460;"></div>
<div class=t style="left:1013.0px;top:731.1px;font-size:29px;color:#0a1670;font-weight:400;font-family:'Liberation Sans';font-style:normal;transform:scaleX(1.0281);transform-origin:0 0;">G1 POT REACTIVA</div>
<svg class=a style='left:868px;top:580px' width='130' height='295'>
<rect x='5' y='8.5' width='120.7' height='281.5' fill='#4b4d52'/>
<rect x='5' y='21' width='34' height='26' fill='#e6e6e2'/>
<rect x='16' y='28' width='6' height='14' fill='#55575b'/><rect x='27' y='28' width='6' height='10' fill='#55575b'/>
<rect x='38' y='24' width='74.4' height='12' fill='#ecece8'/>
<rect x='95.5' y='24' width='16.2' height='136' fill='#ededea'/>
<rect x='73.7' y='36' width='21.8' height='124' fill='#dcdcd8'/>
<rect x='5' y='73.7' width='90' height='6' fill='#e8e8e4'/>
<path d='M5 52 H36 Q46 56 44 64 Q40 70 30 70 H5 Z' fill='#8cb2da'/>
<path d='M5 108 H50 Q62 112 61 120 Q58 128 48 128 H5 Z' fill='#8cb2da'/>
<rect x='5' y='128' width='70' height='31.6' fill='#e2e4e4'/>
<rect x='5' y='147' width='70' height='1.5' fill='#707478'/>
<rect x='111.7' y='140' width='14' height='20' fill='#d2d2d2'/>
<rect x='5' y='159.6' width='120.7' height='41' fill='#dcdcd8'/>
<rect x='5' y='159.6' width='31' height='41' fill='#c8c8c4'/>
<path d='M62.9 200.6 H125.7 V246.6 L100 238 L62.9 226 Z' fill='#7fc0c8'/>
<rect x='5' y='183.8' width='30' height='20' fill='#72b8c4'/>
<rect x='5' y='225' width='120.7' height='43.4' fill='#b9bbbc'/>
<rect x='5' y='202' width='59' height='14.4' fill='#7ac2cc' rx='3'/>
<rect x='5' y='216.4' width='53' height='32.6' fill='#1c1c1c'/>
<path d='M10 216 l8 33 M20 216 l8 33 M30 216 l8 33 M40 216 l7 33 M50 216 l5 30' stroke='#c8c6bc' stroke-width='2.2'/>
<rect x='5' y='249' width='59' height='8.5' fill='#7ac2cc' rx='3'/>
<rect x='5' y='257.5' width='20' height='11' fill='#72b8c4'/>
<rect x='23' y='268.4' width='102.7' height='21.6' fill='#e4e4e2'/>
<rect x='5' y='268.4' width='18' height='21.6' fill='#a8a8a8'/>
</svg>
<div class=a style="left:1656px;top:278px;width:4px;height:916px;background:#fbfbfb;"></div>
<div class=a style="left:1660px;top:278px;width:15px;height:945px;background:#efefef;"></div>
<div class=a style="left:1667px;top:575px;width:3px;height:322px;background:#7a7a7a;border-radius:2px"></div>
<div class=a style="left:80px;top:1194px;width:21px;height:28px;background:#efefef;"></div>
<div class=a style="left:103px;top:1194px;width:1572px;height:28px;background:linear-gradient(#f9f9f9,#ececec);"></div>
<div class=a style="left:101px;top:1194px;width:2px;height:28px;background:#a8a8a8;"></div>
<div class=a style="left:873px;top:1206px;width:275px;height:3px;background:#7a7a7a;border-radius:2px"></div>
<div class=a style="left:80px;top:1222px;width:1595px;height:1px;background:#8ea9c5;"></div>
<div class=a style="left:80px;top:1223px;width:1595px;height:5px;background:#b0d6f5;"></div>
<div class=a style="left:80px;top:1228px;width:1595px;height:1px;background:#8ea9c5;"></div>
<div class=a style="left:80px;top:1229px;width:1595px;height:12px;background:#efefef;"></div>
<div class=a style="left:93px;top:1232px;width:2px;height:9px;background:#777;"></div>
<div class=a style="left:1026px;top:1232px;width:2px;height:9px;background:#777;"></div>
<div class=a style="left:1164px;top:1232px;width:2px;height:9px;background:#777;"></div>
<div class=a style="left:1302px;top:1232px;width:2px;height:9px;background:#777;"></div>
<div class=a style="left:1408px;top:1232px;width:2px;height:9px;background:#777;"></div>
<div class=a style="left:1514px;top:1232px;width:2px;height:9px;background:#777;"></div>
<div class=a style="left:1553px;top:1232px;width:2px;height:9px;background:#777;"></div>
<div class=a style="left:1606px;top:1232px;width:2px;height:9px;background:#777;"></div>
<div class=a style="left:1667px;top:1232px;width:2px;height:9px;background:#777;"></div>
<svg class=a style='left:0;top:0' width='1755' height='214'><rect x='874.5' y='92.5' width='4' height='11' fill='#fff' stroke='#b4b4b4' stroke-width='1' /><line x1='890' y1='98.5' x2='916' y2='98.5' stroke='#b4b4b4' stroke-width='1'/><rect x='894.5' y='92.5' width='8' height='11.5' fill='#fff' stroke='#b4b4b4' stroke-width='1' /><rect x='905' y='89' width='8' height='18.5' fill='#8a8a8a' stroke='#8a8a8a' stroke-width='1' /><rect x='930.5' y='96.5' width='8' height='10' fill='#fff' stroke='#b4b4b4' stroke-width='1' /><rect x='941.5' y='88' width='7.5' height='18.5' fill='#8a8a8a' stroke='#8a8a8a' stroke-width='1' /><line x1='928' y1='108.5' x2='952' y2='108.5' stroke='#b4b4b4' stroke-width='1.5'/><line x1='960.5' y1='85' x2='960.5' y2='112' stroke='#d0d0d0' stroke-width='1'/><rect x='968.5' y='86.5' width='23.5' height='23.5' fill='#f4f4f4' stroke='#8a8a8a' stroke-width='1.2' /><rect x='969' y='95.5' width='22.5' height='5' fill='#f6bd38' stroke='none' stroke-width='0' /><path d='M980 87 v6 M976.5 91 l3.5 4 l3.5 -4 z' fill='#3a3a3a' stroke='#3a3a3a' stroke-width='1.2'/><path d='M980 110 v-6 M976.5 106 l3.5 -4 l3.5 4 z' fill='#3a3a3a' stroke='#3a3a3a' stroke-width='1.2'/><rect x='1004.5' y='86.5' width='23.5' height='23.5' fill='#f4f4f4' stroke='#8a8a8a' stroke-width='1.2' /><rect x='1013.5' y='87' width='5' height='22.5' fill='#f6bd38' stroke='none' stroke-width='0' /><path d='M1005 98.3 h6 M1009 94.8 l4 3.5 l-4 3.5 z' fill='#3a3a3a' stroke='#3a3a3a' stroke-width='1.2'/><path d='M1028 98.3 h-6 M1024 94.8 l-4 3.5 l4 3.5 z' fill='#3a3a3a' stroke='#3a3a3a' stroke-width='1.2'/><line x1='1037' y1='85' x2='1037' y2='112' stroke='#d0d0d0' stroke-width='1'/><line x1='1044' y1='98.5' x2='1069' y2='98.5' stroke='#b4b4b4' stroke-width='1'/><rect x='1044.5' y='93' width='5' height='11' fill='#fff' stroke='#b4b4b4' stroke-width='1' /><rect x='1054.5' y='91' width='3.5' height='14.5' fill='#8a8a8a' stroke='#8a8a8a' stroke-width='1' /><rect x='1063.5' y='93' width='5' height='11' fill='#fff' stroke='#b4b4b4' stroke-width='1' /><line x1='1093.5' y1='86' x2='1093.5' y2='110' stroke='#b4b4b4' stroke-width='1'/><rect x='1087' y='86.5' width='13' height='5' fill='#fff' stroke='#b4b4b4' stroke-width='1' /><rect x='1086' y='96' width='15' height='4.5' fill='#8a8a8a' stroke='#8a8a8a' stroke-width='1' /><rect x='1087' y='104.5' width='13' height='5' fill='#fff' stroke='#b4b4b4' stroke-width='1' /><rect x='1117.5' y='86.5' width='5' height='5' fill='#fff' stroke='#b4b4b4' stroke-width='1' /><rect x='1126' y='86' width='6' height='6' fill='#8a8a8a' stroke='#8a8a8a' stroke-width='1' /><rect x='1135.5' y='86.5' width='5' height='5' fill='#fff' stroke='#b4b4b4' stroke-width='1' /><line x1='1122.5' y1='89' x2='1135.5' y2='89' stroke='#b4b4b4' stroke-width='1'/><rect x='1117' y='95' width='6' height='6' fill='#8a8a8a' stroke='#8a8a8a' stroke-width='1' /><rect x='1117.5' y='104.5' width='5' height='5' fill='#fff' stroke='#b4b4b4' stroke-width='1' /><text x='1125' y='109.5' font-family='Liberation Sans' font-size='12' fill='#999'>XY</text><line x1='888.5' y1='133' x2='888.5' y2='159' stroke='#d0d0d0' stroke-width='1'/><rect x='896.5' y='134.5' width='22' height='22' fill='none' stroke='#8a8a8a' stroke-width='1.2' /><rect x='899' y='138' width='9.5' height='9.5' fill='#8a8a8a' stroke='none' stroke-width='0' /><rect x='905' y='143.5' width='10.5' height='10' fill='#fff' stroke='#b4b4b4' stroke-width='1' /><rect x='933' y='135.3' width='13' height='11.7' fill='#8a8a8a' stroke='none' stroke-width='0' /><rect x='942' y='144' width='12' height='11.8' fill='#fff' stroke='#b4b4b4' stroke-width='1' /><rect x='932.8' y='134.8' width='2.4' height='2.4' fill='#8a8a8a' stroke='none' stroke-width='0' /><rect x='943.8' y='134.8' width='2.4' height='2.4' fill='#8a8a8a' stroke='none' stroke-width='0' /><rect x='932.8' y='144.8' width='2.4' height='2.4' fill='#8a8a8a' stroke='none' stroke-width='0' /><rect x='952.8' y='143.8' width='2.4' height='2.4' fill='#8a8a8a' stroke='none' stroke-width='0' /><rect x='952.8' y='153.8' width='2.4' height='2.4' fill='#8a8a8a' stroke='none' stroke-width='0' /><rect x='940.8' y='153.8' width='2.4' height='2.4' fill='#8a8a8a' stroke='none' stroke-width='0' /><path d='M974 141 L983 134 Q986 133 988 135 L991 139 Q992 141 990 143 L983 150 Q981 151 979 149 L975 145 Q973 143 974 141 Z' fill='#f6bd38' stroke='#e8a828' stroke-width='0.8'/><line x1='977' y1='147' x2='969.5' y2='156.5' stroke='#7a7a7a' stroke-width='1.5'/><line x1='1001' y1='133' x2='1001' y2='159' stroke='#d0d0d0' stroke-width='1'/><rect x='1011.5' y='135' width='10.5' height='11' fill='#dcdcdc' stroke='#8a8a8a' stroke-width='1' /><rect x='1020.5' y='146' width='11' height='11' fill='#e8e8e8' stroke='#8a8a8a' stroke-width='1' /><rect x='1016' y='140.5' width='11' height='10.2' fill='#3a8ee6' stroke='none' stroke-width='0' /><path d='M1042 145 h8 l-4.0 4.8 z' fill='#1f2f78' stroke='none' stroke-width='1'/><rect x='1062.5' y='134.5' width='23.5' height='12.5' fill='#f6bd38' stroke='none' stroke-width='0' /><rect x='1062.5' y='147' width='23.5' height='10' fill='#f8f8f8' stroke='#999' stroke-width='0.8' stroke-dasharray='2 2'/><path d='M1074 155 V139 M1070.5 142.5 l3.5 -4 l3.5 4 z' fill='#3a3a3a' stroke='#3a3a3a' stroke-width='1.4'/><path d='M1094 145 h8 l-4.0 4.8 z' fill='#1f2f78' stroke='none' stroke-width='1'/><rect x='1115' y='134' width='23' height='7.5' fill='#f6bd38' stroke='none' stroke-width='0' /><rect x='1115' y='141.5' width='23' height='6.5' fill='#f8f8f8' stroke='#999' stroke-width='0.8' stroke-dasharray='2 2'/><path d='M1126.5 158 V150 M1123 152.5 l3.5 -4 l3.5 4 z' fill='#3a3a3a' stroke='#3a3a3a' stroke-width='1.4'/><path d='M1147 145 h8 l-4.0 4.8 z' fill='#1f2f78' stroke='none' stroke-width='1'/><path d='M1170 135 L1190 147.5 L1170 157 Z' fill='#a8a8a8' stroke='none' stroke-width='1'/><path d='M1170 135 L1188 145 L1170 145 Z' fill='#f4f4f4' stroke='none' stroke-width='1'/><path d='M1200 145 h8 l-4.0 4.8 z' fill='#c4c4c4' stroke='none' stroke-width='1'/><text x='1232' y='155.5' font-family='Liberation Sans' font-size='10' fill='#555'>A</text><text x='1239' y='156' font-family='Liberation Sans' font-size='23' fill='#3f8fe0'>A</text><path d='M1236.5 146 V138 M1234.5 140 l2 -3 l2 3 z' fill='#555' stroke='#555' stroke-width='1'/><text x='1267' y='156' font-family='Liberation Sans' font-size='23' fill='#555'>A</text><text x='1284' y='156' font-family='Liberation Sans' font-size='10' fill='#3f8fe0'>A</text><path d='M1287.5 137 V143 M1285.5 141 l2 3 l2 -3 z' fill='#555' stroke='#555' stroke-width='1'/><path d='M1315 137.5 H1327 M1322 137.5 L1311 156 M1305 156 H1317' fill='none' stroke='#a4a4a4' stroke-width='2.4'/><text x='1344' y='152' font-family='Liberation Sans' font-size='20' fill='#3a3a3a'>A</text><rect x='1341' y='153' width='25' height='5' fill='#000' stroke='none' stroke-width='0' /><path d='M1374.5 146 h8 l-4.0 4.8 z' fill='#1f2f78' stroke='none' stroke-width='1'/><text x='1395' y='153' font-family='Liberation Serif' font-size='22' font-weight='700' fill='#a6a6a6'>U</text><line x1='1395' y1='155.5' x2='1415' y2='155.5' stroke='#b0b0b0' stroke-width='1.2'/><line x1='1432' y1='138.5' x2='1454' y2='138.5' stroke='#a0a0a0' stroke-width='1.6'/><line x1='1432' y1='142.5' x2='1454' y2='142.5' stroke='#a0a0a0' stroke-width='1.6'/><line x1='1432' y1='146.5' x2='1454' y2='146.5' stroke='#a0a0a0' stroke-width='1.6'/><line x1='1432' y1='150.5' x2='1454' y2='150.5' stroke='#a0a0a0' stroke-width='1.6'/><line x1='1432' y1='154.5' x2='1454' y2='154.5' stroke='#a0a0a0' stroke-width='1.6'/><path d='M1465 146 h8 l-4.0 4.8 z' fill='#1f2f78' stroke='none' stroke-width='1'/><path d='M1568 146 h8 l-4.0 4.8 z' fill='#1f2f78' stroke='none' stroke-width='1'/><text x='1586' y='153' font-family='Liberation Sans' font-size='22' fill='#9a9a9a'>A</text><path d='M1600 156 l9 -9 l3 3 l-9 9 z' fill='#f0f0f0' stroke='#a0a0a0' stroke-width='1.3'/></svg>
<div class=a style="left:1226px;top:80px;width:162px;height:37px;background:#fff;border:1px solid #c6c6c6;box-sizing:border-box"></div>
<div class=a style="left:1388px;top:80px;width:69px;height:37px;background:#fff;border:1px solid #c6c6c6;box-sizing:border-box"></div>
<div class=t style="left:1231.0px;top:90.9px;font-size:19px;color:#222;font-weight:400;font-family:'Liberation Sans';font-style:normal;-webkit-text-stroke:0.25px #222;">Arial</div>
<div class=t style="left:1394.0px;top:90.9px;font-size:19px;color:#222;font-weight:400;font-family:'Liberation Sans';font-style:normal;-webkit-text-stroke:0.25px #222;">30</div>
<div class=a style="left:1373px;top:97px;width:0px;height:0px;background:transparent;border-left:4px solid transparent;border-right:4px solid transparent;border-top:5px solid #555"></div>
<div class=a style="left:1442px;top:97px;width:0px;height:0px;background:transparent;border-left:4px solid transparent;border-right:4px solid transparent;border-top:5px solid #555"></div>
<div class=a style="left:1630px;top:81px;width:35px;height:35px;background:#c8c8c8;"></div>
<div class=t style="left:1635.5px;top:89.6px;font-size:18px;color:#6e6e6e;font-weight:400;font-family:'Liberation Sans';font-style:normal;transform:scaleX(1.0667);transform-origin:0 0;-webkit-text-stroke:0.4px #6e6e6e;">S0</div>
<div class=a style="left:1630px;top:128px;width:35px;height:35px;background:#c8c8c8;"></div>
<div class=t style="left:1636.0px;top:138.0px;font-size:18px;color:#6e6e6e;font-weight:400;font-family:'Liberation Sans';font-style:normal;transform:scaleX(1.0983);transform-origin:0 0;-webkit-text-stroke:0.4px #6e6e6e;">L1</div>
<div class=a style="left:0px;top:0px;width:80px;height:1241px;background:#fff;z-index:0"></div>
<div class=a style="left:1675px;top:0px;width:80px;height:1241px;background:#fff;"></div>
<div class=a style='left:175px;top:8px;width:698px;height:1231px;background:#f0f0f0;border:1px solid #90959b;border-radius:8px;box-shadow:0 4px 24px rgba(0,0,0,.22);overflow:hidden'>
<div class=a style='left:0;top:0;width:698px;height:50px;background:linear-gradient(#eaf2fb 0,#ebf2fa 36px,#f0f0f0 50px)'></div>
</div>
<div class=t style="left:187.0px;top:23.2px;font-size:18.5px;color:#1b1b1b;font-weight:400;font-family:'Liberation Sans';font-style:normal;-webkit-text-stroke:0.25px #1b1b1b;">NuméricoPropiedades</div>
<svg class=a style='left:836px;top:22px' width='20' height='20'><path d='M2.5 2.5 L17.5 17.5 M17.5 2.5 L2.5 17.5' stroke='#222' stroke-width='1.6'/></svg>
<div class=a style="left:186px;top:67px;width:71.5px;height:29px;background:#f9f9f9;border:1px solid #e2e2e2;border-bottom:none;box-sizing:border-box;z-index:2"></div>
<div class=t style="left:194.5px;top:72.1px;font-size:16px;color:#1e1e1e;font-weight:400;font-family:'Liberation Sans';font-style:normal;transform:scaleX(0.9539);transform-origin:0 0;z-index:3;-webkit-text-stroke:0.25px #1e1e1e;">General</div>
<div class=a style="left:257.5px;top:69.5px;width:144.5px;height:26px;background:#f0f0f0;border:1px solid #e3e3e3;border-bottom:none;box-sizing:border-box"></div>
<div class=t style="left:264.5px;top:74.8px;font-size:16px;color:#1e1e1e;font-weight:400;font-family:'Liberation Sans';font-style:normal;transform:scaleX(1.0090);transform-origin:0 0;-webkit-text-stroke:0.25px #1e1e1e;">Formato numérico</div>
<div class=a style="left:402px;top:69.5px;width:88.60000000000002px;height:26px;background:#f0f0f0;border:1px solid #e3e3e3;border-bottom:none;box-sizing:border-box"></div>
<div class=t style="left:411.2px;top:74.8px;font-size:16px;color:#1e1e1e;font-weight:400;font-family:'Liberation Sans';font-style:normal;transform:scaleX(0.9815);transform-origin:0 0;-webkit-text-stroke:0.25px #1e1e1e;">Seguridad</div>
<div class=a style="left:490.6px;top:69.5px;width:61.0px;height:26px;background:#f0f0f0;border:1px solid #e3e3e3;border-bottom:none;box-sizing:border-box"></div>
<div class=t style="left:498.5px;top:74.8px;font-size:16px;color:#1e1e1e;font-weight:400;font-family:'Liberation Sans';font-style:normal;transform:scaleX(1.0057);transform-origin:0 0;-webkit-text-stroke:0.25px #1e1e1e;">Forma</div>
<div class=a style="left:551.6px;top:69.5px;width:106.19999999999993px;height:26px;background:#f0f0f0;border:1px solid #e3e3e3;border-bottom:none;box-sizing:border-box"></div>
<div class=t style="left:560.3px;top:74.8px;font-size:16px;color:#1e1e1e;font-weight:400;font-family:'Liberation Sans';font-style:normal;transform:scaleX(1.0267);transform-origin:0 0;-webkit-text-stroke:0.25px #1e1e1e;">Tipo de letra</div>
<div class=a style="left:657.8px;top:69.5px;width:57.0px;height:26px;background:#f0f0f0;border:1px solid #e3e3e3;border-bottom:none;box-sizing:border-box"></div>
<div class=t style="left:666.8px;top:74.8px;font-size:16px;color:#1e1e1e;font-weight:400;font-family:'Liberation Sans';font-style:normal;transform:scaleX(0.9931);transform-origin:0 0;-webkit-text-stroke:0.25px #1e1e1e;">Perfil</div>
<div class=a style="left:185px;top:95px;width:676px;height:1088px;background:#f9f9f9;border:1px solid #e2e2e2;box-sizing:border-box;z-index:1"></div>
<div class=t style="left:245.7px;top:117.3px;font-size:16px;color:#1e1e1e;font-weight:400;font-family:'Liberation Sans';font-style:normal;transform:scaleX(0.9872);transform-origin:0 0;z-index:2;-webkit-text-stroke:0.25px #1e1e1e;">Descripción :</div>
<div class=a style="left:350px;top:112.5px;width:484px;height:29.5px;background:#fff;border:1px solid #e3e3e3;border-bottom:2px solid #8a8a8a;border-radius:3px;box-sizing:border-box;z-index:2;"></div>
<div class=t style="left:357.0px;top:118.6px;font-size:15.5px;color:#1e1e1e;font-weight:400;font-family:'Liberation Sans';font-style:normal;transform:scaleX(0.9420);transform-origin:0 0;z-index:3;-webkit-text-stroke:0.25px #1e1e1e;">G1 POT REAL</div>
<div class=a style="left:195px;top:157.5px;width:656px;height:51.5px;background:transparent;border:1px solid #e0e0e0;box-sizing:border-box;z-index:2;"></div>
<div class=a style="left:229px;top:175px;width:20px;height:20px;background:#f3f3f3;border:1.5px solid #6f6f6f;border-radius:4px;box-sizing:border-box;z-index:2;"></div>
<div class=t style="left:253.5px;top:177.5px;font-size:16px;color:#1e1e1e;font-weight:400;font-family:'Liberation Sans';font-style:normal;transform:scaleX(1.0129);transform-origin:0 0;z-index:2;-webkit-text-stroke:0.25px #1e1e1e;">Permitir entrada</div>
<div class=a style="left:809px;top:170px;width:32px;height:28.5px;background:#ffffff;z-index:2;"></div>
<div class=a style="left:809px;top:308px;width:32px;height:30px;background:#ffffff;z-index:2;"></div>
<div class=a style="left:195.5px;top:542.5px;width:655px;height:99px;background:transparent;border:1px solid #e0e0e0;box-sizing:border-box;z-index:2;"></div>
<div class=a style="left:203px;top:535px;width:107px;height:14px;background:#f9f9f9;z-index:2;"></div>
<div class=t style="left:207.0px;top:535.5px;font-size:16px;color:#1e1e1e;font-weight:400;font-family:'Liberation Sans';font-style:normal;transform:scaleX(0.9910);transform-origin:0 0;z-index:3;-webkit-text-stroke:0.25px #1e1e1e;">Leer dirección</div>
<div class=t style="left:217.3px;top:565.7px;font-size:16px;color:#1e1e1e;font-weight:400;font-family:'Liberation Sans';font-style:normal;transform:scaleX(0.9867);transform-origin:0 0;z-index:2;-webkit-text-stroke:0.25px #1e1e1e;">Dispositivo :</div>
<div class=a style="left:312px;top:560.7px;width:403px;height:29px;background:#fff;border:1px solid #e0e0e0;border-bottom:1px solid #c8c8c8;border-radius:4px;box-sizing:border-box;z-index:2;"></div>
<div class=t style="left:317.5px;top:568.3px;font-size:15.5px;color:#111;font-weight:400;font-family:'Liberation Sans';font-style:normal;transform:scaleX(0.9558);transform-origin:0 0;z-index:3;-webkit-text-stroke:0.25px #111;">MAESTRO MODBUS TCP/IP</div>
<svg class=a style='left:695px;top:570px;z-index:3' width='16' height='12'><path d='M1.5 2.5 L7.5 8.5 L13.5 2.5' fill='none' stroke='#444' stroke-width='1.4'/></svg>
<div class=a style="left:720px;top:562.3px;width:75px;height:26.3px;background:#fafafa;border:1px solid #dedede;border-bottom:1px solid #c4c4c4;border-radius:4px;box-sizing:border-box;z-index:2;"></div>
<div class=a style="left:800.5px;top:562.3px;width:30.4px;height:26.3px;background:#fafafa;border:1px solid #dedede;border-bottom:1px solid #c4c4c4;border-radius:4px;box-sizing:border-box;z-index:2;"></div>
<svg class=a style='left:745px;top:566px;z-index:3' width='26' height='20'><path d='M6 4 H17 V10 M14 15 H6 L1.5 9.5 L6 4' fill='none' stroke='#666' stroke-width='1.3'/><circle cx='14.5' cy='12' r='4' fill='#e0a040'/></svg>
<svg class=a style='left:805px;top:566px;z-index:3' width='24' height='20'><path d='M6 4 H17 V9 M12 15 H6 L1.5 9.5 L6 4' fill='none' stroke='#666' stroke-width='1.3'/><path d='M15 8 V17 M10.5 12.5 H19.5' stroke='#2aa070' stroke-width='2.2'/></svg>
<div class=t style="left:227.6px;top:603.6px;font-size:16px;color:#1e1e1e;font-weight:400;font-family:'Liberation Sans';font-style:normal;transform:scaleX(0.9897);transform-origin:0 0;z-index:2;-webkit-text-stroke:0.25px #1e1e1e;">Dirección :</div>
<div class=a style="left:312px;top:596px;width:194px;height:29px;background:#fff;border:1px solid #e0e0e0;border-bottom:1px solid #c8c8c8;border-radius:4px;box-sizing:border-box;z-index:2;"></div>
<div class=t style="left:317.5px;top:604.9px;font-size:15.5px;color:#111;font-weight:400;font-family:'Liberation Sans';font-style:normal;z-index:3;-webkit-text-stroke:0.25px #111;">3x</div>
<div class=a style="left:491px;top:608.5px;width:0px;height:0px;background:transparent;border-left:5px solid transparent;border-right:5px solid transparent;border-top:5px solid #111;z-index:2;"></div>
<div class=a style="left:512px;top:596px;width:135px;height:29.5px;background:#fff;border:1px solid #ececec;border-bottom:2px solid #8a8a8a;border-radius:3px 3px 0 0;box-sizing:border-box;z-index:2;"></div>
<div class=t style="left:519.0px;top:602.9px;font-size:15px;color:#111;font-weight:400;font-family:'Liberation Sans';font-style:normal;z-index:3;-webkit-text-stroke:0.25px #111;">61</div>
<div class=a style="left:649px;top:596px;width:63px;height:29px;background:#f7f7f7;border-left:2px solid #a8a8a8;border-top:2px solid #c4c4c4;box-sizing:border-box;z-index:2;"></div>
<div class=t style="left:258.2px;top:915.7px;font-size:33px;color:#151515;font-weight:400;font-family:'Liberation Sans';font-style:normal;transform:scaleX(1.0815);transform-origin:0 0;z-index:2;">And this picture show the config of</div>
<div class=t style="left:258.2px;top:959.7px;font-size:33px;color:#151515;font-weight:400;font-family:'Liberation Sans';font-style:normal;transform:scaleX(1.0580);transform-origin:0 0;z-index:2;">32 bit registers</div>
<div class=a style="left:400px;top:1195.4px;width:107.5px;height:32.3px;background:#fdfdfd;border:2px solid #2a7bc8;border-radius:5px;box-sizing:border-box"></div>
<div class=t style="left:426.3px;top:1204.6px;font-size:15.5px;color:#1e1e1e;font-weight:400;font-family:'Liberation Sans';font-style:normal;transform:scaleX(1.0295);transform-origin:0 0;-webkit-text-stroke:0.25px #1e1e1e;">Aceptar</div>
<div class=a style="left:519.6px;top:1195.4px;width:105.89999999999998px;height:32.3px;background:#fdfdfd;border:1px solid #dcdcdc;border-bottom:1px solid #c0c0c0;border-radius:5px;box-sizing:border-box"></div>
<div class=t style="left:541.7px;top:1204.6px;font-size:15.5px;color:#1e1e1e;font-weight:400;font-family:'Liberation Sans';font-style:normal;-webkit-text-stroke:0.25px #1e1e1e;">Cancelar</div>
<div class=a style="left:637.2px;top:1195.4px;width:106.39999999999998px;height:32.3px;background:#fdfdfd;border:1px solid #dcdcdc;border-bottom:1px solid #c0c0c0;border-radius:5px;box-sizing:border-box"></div>
<div class=t style="left:665.0px;top:1204.6px;font-size:15.5px;color:#1e1e1e;font-weight:400;font-family:'Liberation Sans';font-style:normal;transform:scaleX(1.0340);transform-origin:0 0;-webkit-text-stroke:0.25px #1e1e1e;">Aplicar</div>
<div class=a style="left:755.8px;top:1195.4px;width:106.70000000000005px;height:32.3px;background:#fdfdfd;border:1px solid #dcdcdc;border-bottom:1px solid #c0c0c0;border-radius:5px;box-sizing:border-box"></div>
<div class=t style="left:786.0px;top:1204.6px;font-size:15.5px;color:#1e1e1e;font-weight:400;font-family:'Liberation Sans';font-style:normal;transform:scaleX(1.0533);transform-origin:0 0;-webkit-text-stroke:0.25px #1e1e1e;">Ayuda</div>
<div class=a style="left:1461px;top:61px;width:128px;height:101px;background:#000;border-radius:50%"></div>
<svg class=a style='left:1500px;top:95px' width='25' height='35'><path d='M14.6,2.8 H17.7 V30 H13.7 V9.6 Q10.8,11.2 6.6,11.4 V8.6 Q12.2,7.6 14.6,2.8 Z' fill='#fff'/></svg>
<div class=t style="left:1524.6px;top:93.3px;font-size:37.5px;color:#fff;font-weight:400;font-family:'Liberation Sans';font-style:normal;-webkit-text-stroke:0.5px #fff;">8</div>
</body></html>
